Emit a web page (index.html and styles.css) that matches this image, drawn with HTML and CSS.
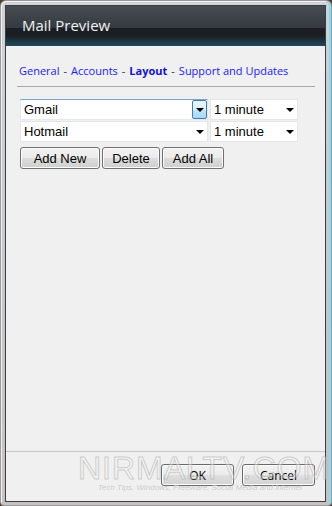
FILE: index.html
```html
<!DOCTYPE html>
<html>
<head>
<meta charset="utf-8">
<link rel="stylesheet" href="styles.css">
</head>
<body>
<div class="window">
  <div class="client">
    <div class="header"><span class="title">Mail Preview</span></div>
    <div class="body">
      <nav class="nav">
        <a class="link">General</a><span class="sep">-</span><a class="link">Accounts</a><span class="sep">-</span><a class="link active">Layout</a><span class="sep">-</span><a class="link">Support and Updates</a>
      </nav>
      <div class="rule"></div>
      <div class="rows">
        <div class="row">
          <div class="combo wide focused"><span class="val">Gmail</span><span class="drop hot"><i class="arrow"></i></span></div>
          <div class="combo narrow"><span class="val">1 minute</span><span class="drop"><i class="arrow"></i></span></div>
        </div>
        <div class="row">
          <div class="combo wide"><span class="val">Hotmail</span><span class="drop"><i class="arrow"></i></span></div>
          <div class="combo narrow"><span class="val">1 minute</span><span class="drop"><i class="arrow"></i></span></div>
        </div>
        <div class="buttons">
          <button class="btn b-add">Add New</button>
          <button class="btn b-del">Delete</button>
          <button class="btn b-all">Add All</button>
        </div>
      </div>
    </div>
    <div class="footer">
      <button class="btn dlg">OK</button>
      <button class="btn dlg">Cancel</button>
      <div class="watermark">
        <div class="wm-big">NIRMALTV.COM</div>
        <div class="wm-small">Tech Tips, Windows, Freeware, Social Media and Internet</div>
      </div>
    </div>
  </div>
</div>
</body>
</html>
```

FILE: styles.css
```css
html, body {
  margin: 0;
  padding: 0;
  background: #5a3a2a;
}
body {
  width: 332px;
  height: 506px;
  overflow: hidden;
}
.window {
  box-sizing: border-box;
  width: 332px;
  height: 506px;
  padding: 4px 5px 3px 4px;
  background: linear-gradient(#cfd2d6, #c4c6c8 60%, #c9c0c0);
  border: 1px solid #9a9a9a;
  border-radius: 6px 6px 4px 4px;
  box-shadow: inset -2px 0 0 #7fe0f5, inset 1px 1px 0 #f2f2f2;
}
.client {
  box-sizing: border-box;
  height: 100%;
  border: 1px solid #3a3d42;
  display: flex;
  flex-direction: column;
  background: #f0f0f0;
  position: relative;
}
.header {
  height: 40px;
  flex: none;
  display: flex;
  align-items: center;
  padding-left: 16px;
  background: linear-gradient(#474c53 0%, #353a40 55%, #1b1f23 56%, #1a1f24 75%, #1f4a5e 100%);
}
.title {
  font-family: "Open Sans", "DejaVu Sans", sans-serif;
  font-size: 15px;
  color: #eef0f2;
  margin-top: -2px;
}
.body {
  flex: 1;
  padding: 0 10px 0 11px;
}
.nav {
  padding: 17px 0 0 2px;
  font-family: "Open Sans", "Noto Sans", sans-serif;
  font-size: 11px;
  line-height: 15px;
  height: 15px;
  white-space: nowrap;
}
.link {
  color: #1a1aff;
}
.link.active {
  font-weight: bold;
  color: #1010d8;
}
.sep {
  color: #333;
  margin: 0 4px;
}
.rule {
  margin-top: 8px;
  height: 1px;
  background: #a9a9a9;
}
.rows {
  padding: 12px 0 0 3px;
}
.row {
  display: flex;
  gap: 2px;
  margin-bottom: 1px;
}
.combo {
  box-sizing: border-box;
  height: 21px;
  background: #fff;
  border: 1px solid #e6e6e6;
  display: flex;
  align-items: center;
  font-family: "Liberation Sans", Arial, sans-serif;
  font-size: 13px;
  color: #000;
}
.combo.wide { width: 188px; }
.combo.narrow { width: 88px; }
.combo.focused {
  border-color: #e3e9ef;
  border-top-color: #7da2ce;
}
.val {
  flex: 1;
  padding-left: 3px;
}
.drop {
  box-sizing: border-box;
  width: 15px;
  height: 19px;
  display: flex;
  align-items: center;
  justify-content: center;
}
.drop.hot {
  border: 1px solid #3c7fb1;
  background: linear-gradient(#eaf6fd, #d9f0fc 50%, #bee6fd 51%, #a7d9f5);
  border-radius: 2px;
}
.arrow {
  width: 0;
  height: 0;
  border-left: 4px solid transparent;
  border-right: 4px solid transparent;
  border-top: 4px solid #000;
}
.buttons {
  display: flex;
  gap: 2px;
  margin-top: 5px;
}
.btn {
  box-sizing: border-box;
  height: 22px;
  padding: 0;
  border: 1px solid #707070;
  border-radius: 3px;
  background: linear-gradient(#f2f2f2, #ebebeb 50%, #dddddd 51%, #cfcfcf);
  box-shadow: inset 0 0 0 1px #fcfcfc;
  font-family: "Liberation Sans", Arial, sans-serif;
  font-size: 13px;
  color: #000;
}
.b-add { width: 80px; }
.b-del { width: 58px; }
.b-all { width: 62px; }
.footer {
  flex: none;
  height: 50px;
  border-top: 1px solid #c6c6c6;
  display: flex;
  justify-content: flex-end;
  align-items: flex-start;
  gap: 8px;
  padding: 12px 10px 0 0;
  box-sizing: border-box;
  position: relative;
}
.btn.dlg {
  width: 73px;
  font-family: "Open Sans", "Noto Sans", sans-serif;
  font-size: 12px;
  border-color: #6a6a6a;
  background: linear-gradient(rgba(242,242,242,0.9), rgba(235,235,235,0.9) 50%, rgba(221,221,221,0.9) 51%, rgba(207,207,207,0.9));
}
.watermark {
  position: absolute;
  left: 72px;
  top: 1px;
  width: 244px;
  pointer-events: none;
  text-align: center;
}
.wm-big {
  font-family: "Liberation Sans", Arial, sans-serif;
  font-size: 32px;
  line-height: 30px;
  letter-spacing: 1px;
  color: rgba(255,255,255,0.35);
  -webkit-text-stroke: 1px rgba(170,170,170,0.55);
}
.wm-small {
  font-family: "Liberation Sans", Arial, sans-serif;
  font-size: 8px;
  font-style: italic;
  line-height: 9px;
  margin-top: 0;
  color: rgba(150,150,150,0.55);
  text-shadow: 0 0 1px #fff;
  white-space: nowrap;
}
```
